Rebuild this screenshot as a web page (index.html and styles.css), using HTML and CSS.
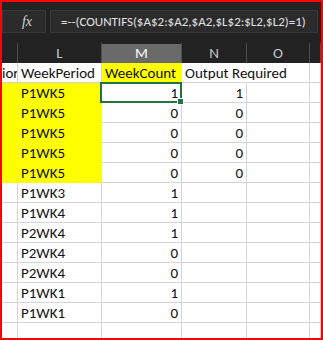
FILE: index.html
```html
<!DOCTYPE html>
<html>
    <head>
        <link rel="stylesheet" href="styles.css">
    </head>
    <body>
        <div class="window">
            <div class="formula-bar">
                <div class="fx-box"><span class="fx">fx</span></div>
                <div class="formula">=--(COUNTIFS($A$2:$A2,$A2,$L$2:$L2,$L2)=1)</div>
            </div>
            <div class="sheet">
                <div class="head"></div>
                <div class="head">L</div>
                <div class="head head-on">M</div>
                <div class="head">N</div>
                <div class="head">O</div>
                <div class="head"></div>

                <div class="cell tail">ior</div>
                <div class="cell">WeekPeriod</div>
                <div class="cell hl">WeekCount</div>
                <div class="cell spill">Output Required</div>
                <div class="cell"></div>
                <div class="cell"></div>

                <div class="cell hl"></div>
                <div class="cell hl">P1WK5</div>
                <div class="cell num selected">1</div>
                <div class="cell num">1</div>
                <div class="cell"></div>
                <div class="cell"></div>

                <div class="cell hl"></div>
                <div class="cell hl">P1WK5</div>
                <div class="cell num">0</div>
                <div class="cell num">0</div>
                <div class="cell"></div>
                <div class="cell"></div>

                <div class="cell hl"></div>
                <div class="cell hl">P1WK5</div>
                <div class="cell num">0</div>
                <div class="cell num">0</div>
                <div class="cell"></div>
                <div class="cell"></div>

                <div class="cell hl"></div>
                <div class="cell hl">P1WK5</div>
                <div class="cell num">0</div>
                <div class="cell num">0</div>
                <div class="cell"></div>
                <div class="cell"></div>

                <div class="cell hl"></div>
                <div class="cell hl">P1WK5</div>
                <div class="cell num">0</div>
                <div class="cell num">0</div>
                <div class="cell"></div>
                <div class="cell"></div>

                <div class="cell"></div>
                <div class="cell">P1WK3</div>
                <div class="cell num">1</div>
                <div class="cell"></div>
                <div class="cell"></div>
                <div class="cell"></div>

                <div class="cell"></div>
                <div class="cell">P1WK4</div>
                <div class="cell num">1</div>
                <div class="cell"></div>
                <div class="cell"></div>
                <div class="cell"></div>

                <div class="cell"></div>
                <div class="cell">P2WK4</div>
                <div class="cell num">1</div>
                <div class="cell"></div>
                <div class="cell"></div>
                <div class="cell"></div>

                <div class="cell"></div>
                <div class="cell">P2WK4</div>
                <div class="cell num">0</div>
                <div class="cell"></div>
                <div class="cell"></div>
                <div class="cell"></div>

                <div class="cell"></div>
                <div class="cell">P2WK4</div>
                <div class="cell num">0</div>
                <div class="cell"></div>
                <div class="cell"></div>
                <div class="cell"></div>

                <div class="cell"></div>
                <div class="cell">P1WK1</div>
                <div class="cell num">1</div>
                <div class="cell"></div>
                <div class="cell"></div>
                <div class="cell"></div>

                <div class="cell"></div>
                <div class="cell">P1WK1</div>
                <div class="cell num">0</div>
                <div class="cell"></div>
                <div class="cell"></div>
                <div class="cell"></div>

                <div class="cell"></div>
                <div class="cell"></div>
                <div class="cell"></div>
                <div class="cell"></div>
                <div class="cell"></div>
                <div class="cell"></div>
            </div>
        </div>
    </body>
</html>
```

FILE: styles.css
```css
body {
    margin: 0;
    background-color: white;
}

.window {
    width: 323px;
    height: 340px;
    box-sizing: border-box;
    border: 2px solid #ff0000;
    overflow: hidden;
    background-color: white;
}

.formula-bar {
    display: flex;
    gap: 4px;
    height: 40px;
    padding: 8px 3px 0 0;
    box-sizing: border-box;
    background-color: #222222;
}

.fx-box {
    width: 44px;
    height: 23px;
    box-sizing: border-box;
    padding-left: 6px;
    background-color: #2b2b2b;
    border: 1px solid #383838;
    display: flex;
    justify-content: center;
    align-items: center;
}

.fx {
    font-family: "Liberation Serif", serif;
    font-style: italic;
    font-size: 14px;
    color: #d4d4d4;
}

.formula {
    flex: 1;
    height: 23px;
    box-sizing: border-box;
    background-color: #2b2b2b;
    border: 1px solid #383838;
    padding-left: 10px;
    font-family: "Carlito", "Liberation Sans Narrow", "Liberation Sans", sans-serif;
    font-size: 13px;
    line-height: 21px;
    color: #e2e2e2;
    white-space: nowrap;
}

.sheet {
    display: grid;
    grid-template-columns: 16px 84px 80px 65px 63px 1fr;
    grid-auto-rows: 20px;
    grid-template-rows: 21px;
    font-family: "Carlito", "Liberation Sans", sans-serif;
    font-size: 15px;
}

.head {
    background-color: #222222;
    border-right: 1px solid #4e4e4e;
    border-top: 2px solid #222222;
    color: #c4ccd6;
    text-align: center;
    line-height: 19px;
}

.head-on {
    background-color: #6a6a6a;
    border-top-color: #222222;
    color: #ffffff;
}

.cell {
    border-right: 1px solid #d4d4d4;
    border-bottom: 1px solid #d4d4d4;
    padding: 2px 3px 0 3px;
    line-height: 17px;
    color: #111111;
    white-space: nowrap;
    overflow: hidden;
}

.tail {
    padding-left: 0;
}

.spill {
    overflow: visible;
    border-right-color: white;
}

.hl {
    background-color: #ffff00;
    border-color: #ffff00;
}

.num {
    text-align: right;
}

.selected {
    position: relative;
    overflow: visible;
}

.selected::after {
    content: "";
    position: absolute;
    left: -2px;
    top: -1px;
    right: -1px;
    bottom: -1px;
    border: 2px solid #217346;
}

.selected::before {
    content: "";
    position: absolute;
    right: -3px;
    bottom: -3px;
    width: 5px;
    height: 5px;
    background-color: #217346;
    border: 1px solid white;
    z-index: 1;
}
```
